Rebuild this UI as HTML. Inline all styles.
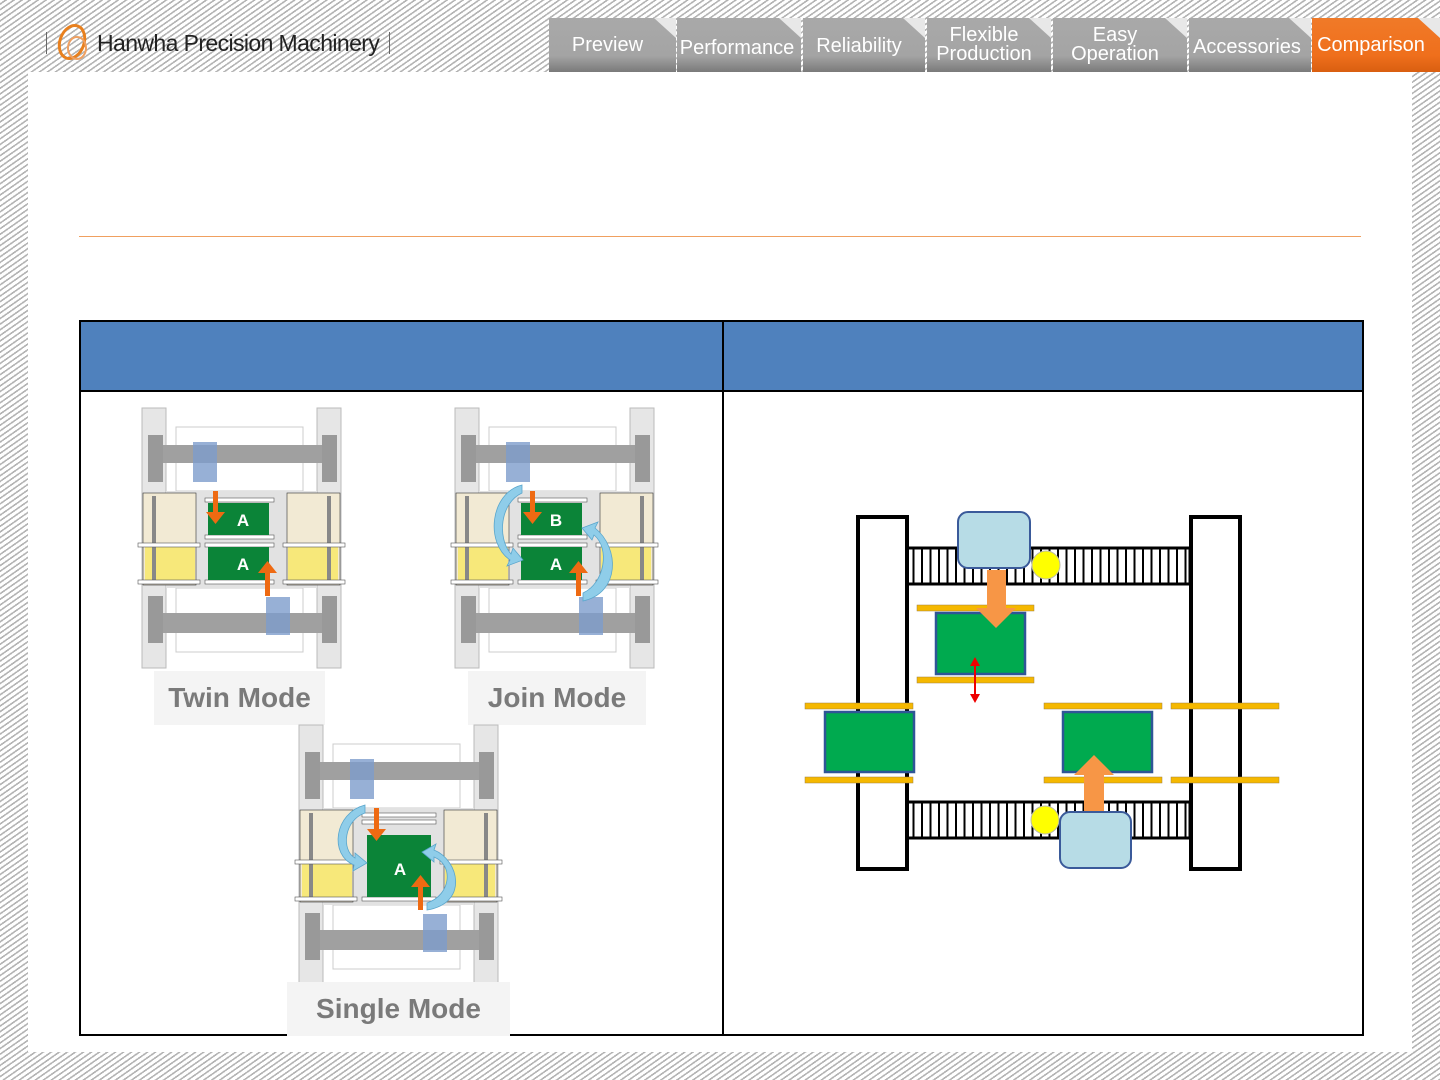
<!DOCTYPE html>
<html><head><meta charset="utf-8"><style>
*{margin:0;padding:0;box-sizing:border-box}
body{width:1440px;height:1080px;position:relative;overflow:hidden;font-family:"Liberation Sans",sans-serif;
background:repeating-linear-gradient(145deg,#fff 0,#fff 2.6px,#b4b4b4 2.6px,#b4b4b4 4.2px,#fff 4.2px,#fff 4.6px)}
.white{position:absolute;left:28px;top:72px;width:1384px;height:980px;background:#fff}
.logo{position:absolute;left:46px;top:22px;height:42px;display:flex;align-items:center}
.logo .txt{font-size:23px;letter-spacing:-0.6px;color:#222;margin-left:2px}
.tab{position:absolute;top:18px;height:54px;background:linear-gradient(#a9a9a9 0,#a4a4a4 70%,#7a7a7a 100%);color:#fff;font-size:20px;text-align:center;display:flex;align-items:center;justify-content:center;line-height:19px;padding-right:10px}
.tab:after{content:"";position:absolute;right:0;top:0;width:0;height:0;border-top:20px solid #e8e8e8;border-left:22px solid transparent}
.tab.on{background:linear-gradient(#f07a28,#ef6f1c 70%,#d95f10)}
.line{position:absolute;left:79px;top:236px;width:1282px;height:1px;background:#f0a060}
.tbl{position:absolute;left:79px;top:320px;width:1285px;height:716px;border:2px solid #000}
.hd{position:absolute;left:0;top:0;width:100%;height:70px;background:#4f81bd;border-bottom:2px solid #000}
.vs{position:absolute;left:641px;top:0;width:1.5px;height:100%;background:#000}
.lbl{position:absolute;background:#f4f4f4;color:#7a7a7a;font-weight:bold;font-size:28px;text-align:center;display:flex;align-items:center;justify-content:center}
svg{position:absolute}
</style></head><body>
<div class="white"></div>
<div class="logo">
<div style="width:1px;height:22px;background:#666;margin-right:8px"></div>
<svg style="position:relative" width="40" height="42" viewBox="0 0 40 42"><ellipse cx="17" cy="20" rx="12" ry="17" fill="none" stroke="#e8801e" stroke-width="3" transform="rotate(20 17 20)"/><ellipse cx="22" cy="26" rx="9" ry="11" fill="none" stroke="#f0a060" stroke-width="2"/></svg>
<span class="txt">Hanwha Precision Machinery</span>
<div style="width:1px;height:22px;background:#666;margin-left:10px"></div>
</div>
<div class="tab" style="left:549px;width:127px">Preview</div>
<div class="tab" style="left:677px;width:124px;padding-top:6px;padding-right:4px">Performance</div>
<div class="tab" style="left:803px;width:122px;padding-top:2px">Reliability</div>
<div class="tab" style="left:927px;width:124px">Flexible<br>Production</div>
<div class="tab" style="left:1053px;width:134px">Easy<br>Operation</div>
<div class="tab" style="left:1189px;width:122px;padding-top:4px;padding-right:6px">Accessories</div>
<div class="tab on" style="left:1312px;width:128px">Comparison</div>
<div class="line"></div>
<div class="tbl"><div class="hd"></div><div class="vs"></div></div>

<svg width="0" height="0"><defs>
<g id="base">
<rect x="0" y="0" width="24" height="260" fill="#e6e6e6" stroke="#bbb"/>
<rect x="175" y="0" width="24" height="260" fill="#e6e6e6" stroke="#bbb"/>
<rect x="34" y="19" width="127" height="64" fill="#fff" stroke="#ccc"/>
<rect x="34" y="180" width="127" height="64" fill="#fff" stroke="#ccc"/>
<rect x="6" y="37" width="187" height="18" fill="#a0a0a0"/>
<rect x="6" y="27" width="15" height="47" fill="#999"/><rect x="180" y="27" width="15" height="47" fill="#999"/>
<rect x="6" y="205" width="187" height="20" fill="#a0a0a0"/>
<rect x="6" y="188" width="15" height="47" fill="#999"/><rect x="180" y="188" width="15" height="47" fill="#999"/>
<rect x="24" y="83" width="151" height="97" fill="#e2e2e2"/>
<rect x="1" y="85" width="53" height="92" fill="#f2ead4" stroke="#333" stroke-width=".6"/>
<rect x="3" y="139" width="50" height="33" fill="#f7e87a"/>
<rect x="145" y="85" width="53" height="92" fill="#f2ead4" stroke="#333" stroke-width=".6"/>
<rect x="146" y="139" width="50" height="33" fill="#f7e87a"/>
<rect x="10" y="88" width="4" height="88" fill="#888"/><rect x="185" y="88" width="4" height="88" fill="#888"/>
<rect x="-4" y="135" width="62" height="4" fill="#fff" stroke="#555" stroke-width=".6"/>
<rect x="-4" y="172" width="62" height="4" fill="#fff" stroke="#555" stroke-width=".6"/>
<rect x="141" y="135" width="62" height="4" fill="#fff" stroke="#555" stroke-width=".6"/>
<rect x="141" y="172" width="62" height="4" fill="#fff" stroke="#555" stroke-width=".6"/>
<rect x="51" y="34" width="24" height="40" fill="#7d9ccc" opacity=".8"/>
<rect x="124" y="189" width="24" height="38" fill="#7d9ccc" opacity=".8"/>
</g>
</defs></svg>

<svg style="left:142px;top:408px;overflow:visible" width="200" height="260">
<use href="#base"/>
<rect x="63" y="90" width="69" height="4" fill="#fff" stroke="#555" stroke-width=".6"/>
<rect x="63" y="127" width="69" height="4" fill="#fff" stroke="#555" stroke-width=".6"/>
<rect x="63" y="135" width="69" height="4" fill="#fff" stroke="#555" stroke-width=".6"/>
<rect x="63" y="172" width="69" height="4" fill="#fff" stroke="#555" stroke-width=".6"/>
<rect x="66" y="95" width="61" height="32" fill="#0b8438"/>
<rect x="66" y="139" width="61" height="33" fill="#0b8438"/>
<text x="101" y="118" fill="#fff" font-size="17" font-weight="bold" text-anchor="middle">A</text>
<text x="101" y="162" fill="#fff" font-size="17" font-weight="bold" text-anchor="middle">A</text>
<path d="M71 83h5v21h7l-9.5 12l-9.5-12h7z" fill="#ee6a12"/>
<path d="M123 188h5v-23h7l-9.5-12l-9.5 12h7z" fill="#ee6a12"/>
</svg>
<div class="lbl" style="left:154px;top:671px;width:171px;height:54px">Twin Mode</div>

<svg style="left:455px;top:408px;overflow:visible" width="200" height="260">
<use href="#base"/>
<rect x="63" y="90" width="69" height="4" fill="#fff" stroke="#555" stroke-width=".6"/>
<rect x="63" y="127" width="69" height="4" fill="#fff" stroke="#555" stroke-width=".6"/>
<rect x="63" y="135" width="69" height="4" fill="#fff" stroke="#555" stroke-width=".6"/>
<rect x="63" y="172" width="69" height="4" fill="#fff" stroke="#555" stroke-width=".6"/>
<rect x="66" y="95" width="61" height="32" fill="#0b8438"/>
<rect x="66" y="139" width="61" height="33" fill="#0b8438"/>
<text x="101" y="118" fill="#fff" font-size="17" font-weight="bold" text-anchor="middle">B</text>
<text x="101" y="162" fill="#fff" font-size="17" font-weight="bold" text-anchor="middle">A</text>
<path d="M67 77C35 85 30 135 55 152l-3 6l16-6l-10-12l-2 6C42 130 45 95 67 85z" fill="#8fcde9" stroke="#5aa6cc" stroke-width=".8"/>
<path d="M128 193C165 185 165 140 140 120l3-6l-16 6l10 12l2-5C155 140 150 175 128 185z" fill="#8fcde9" stroke="#5aa6cc" stroke-width=".8"/>
<path d="M75 83h5v21h7l-9.5 12l-9.5-12h7z" fill="#ee6a12"/>
<path d="M121 188h5v-23h7l-9.5-12l-9.5 12h7z" fill="#ee6a12"/>
</svg>
<div class="lbl" style="left:468px;top:671px;width:178px;height:54px">Join Mode</div>

<svg style="left:299px;top:725px;overflow:visible" width="200" height="260">
<use href="#base"/>
<rect x="63" y="88" width="74" height="4" fill="#fff" stroke="#555" stroke-width=".6"/>
<rect x="63" y="95" width="74" height="4" fill="#fff" stroke="#555" stroke-width=".6"/>
<rect x="63" y="172" width="74" height="4" fill="#fff" stroke="#555" stroke-width=".6"/>
<rect x="68" y="110" width="64" height="62" fill="#0b8438"/>
<text x="101" y="150" fill="#fff" font-size="17" font-weight="bold" text-anchor="middle">A</text>
<path d="M66 80C35 88 30 130 55 140l-1 6l14-8l-12-10l0 5C42 125 45 95 66 88z" fill="#8fcde9" stroke="#5aa6cc" stroke-width=".8"/>
<path d="M128 185C170 178 160 135 135 125l2-6l-14 8l12 10l0-5C155 140 152 170 128 178z" fill="#8fcde9" stroke="#5aa6cc" stroke-width=".8"/>
<path d="M75 83h5v21h7l-9.5 12l-9.5-12h7z" fill="#ee6a12"/>
<path d="M119 185h5v-23h7l-9.5-12l-9.5 12h7z" fill="#ee6a12"/>
</svg>
<div class="lbl" style="left:287px;top:982px;width:223px;height:54px">Single Mode</div>

<svg style="left:0;top:0" width="1440" height="1080">
<defs><pattern id="sl" width="8.5" height="10" patternUnits="userSpaceOnUse"><rect width="8.5" height="10" fill="#fff"/><rect x="3" width="2" height="10" fill="#000"/></pattern></defs>
<rect x="907" y="548" width="283" height="36" fill="url(#sl)" stroke="#000" stroke-width="3"/>
<rect x="907" y="802" width="283" height="36" fill="url(#sl)" stroke="#000" stroke-width="3"/>
<rect x="858" y="517" width="49" height="352" fill="#fff" stroke="#000" stroke-width="4"/>
<rect x="1191" y="517" width="49" height="352" fill="#fff" stroke="#000" stroke-width="4"/>
<rect x="958" y="512" width="72" height="56" rx="10" fill="#b7dce6" stroke="#3a5a9a" stroke-width="2"/>
<circle cx="1046" cy="565" r="14" fill="#ffff00" stroke="#bba" stroke-width="1"/>
<rect x="917" y="605" width="117" height="6" fill="#f5b800" stroke="#a08040" stroke-width=".5"/>
<rect x="917" y="677" width="117" height="6" fill="#f5b800" stroke="#a08040" stroke-width=".5"/>
<rect x="936" y="613" width="89" height="61" fill="#00aa4f" stroke="#2f5597" stroke-width="2.5"/>
<path d="M987 570h19v38h10l-20 20l-20-20h11z" fill="#f79646"/>
<path d="M975 662v36" stroke="#e00" stroke-width="2"/><path d="M970 666l5-9l5 9zM970 694l5 9l5-9z" fill="#e00"/>
<rect x="805" y="703" width="108" height="6" fill="#f5b800" stroke="#a08040" stroke-width=".5"/>
<rect x="805" y="777" width="108" height="6" fill="#f5b800" stroke="#a08040" stroke-width=".5"/>
<rect x="825" y="712" width="89" height="60" fill="#00aa4f" stroke="#2f5597" stroke-width="2.5"/>
<rect x="1044" y="703" width="118" height="6" fill="#f5b800" stroke="#a08040" stroke-width=".5"/>
<rect x="1044" y="777" width="118" height="6" fill="#f5b800" stroke="#a08040" stroke-width=".5"/>
<rect x="1171" y="703" width="108" height="6" fill="#f5b800" stroke="#a08040" stroke-width=".5"/>
<rect x="1171" y="777" width="108" height="6" fill="#f5b800" stroke="#a08040" stroke-width=".5"/>
<rect x="1063" y="712" width="89" height="60" fill="#00aa4f" stroke="#2f5597" stroke-width="2.5"/>
<path d="M1084 815v-40h-10l20-20l20 20h-10v40z" fill="#f79646"/>
<circle cx="1045" cy="820" r="14" fill="#ffff00" stroke="#bba" stroke-width="1"/>
<rect x="1060" y="812" width="71" height="56" rx="10" fill="#b7dce6" stroke="#3a5a9a" stroke-width="2"/>
</svg>
</body></html>
